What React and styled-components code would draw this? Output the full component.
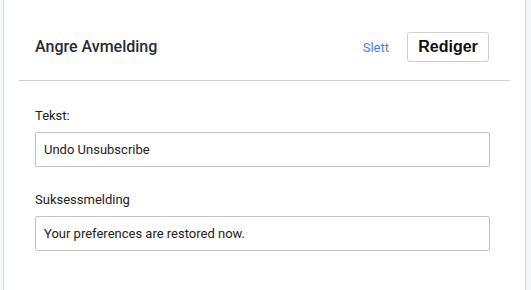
import React from "react";
import styled, { createGlobalStyle } from "styled-components";

const Global = createGlobalStyle`
  html, body { margin: 0; padding: 0; background: #f3f6fa; }
  body { font-family: Roboto, "Liberation Sans", sans-serif; }
`;

const Page = styled.div`
  display: flex;
  width: 531px;
  height: 290px;
  padding-left: 3px;
  box-sizing: border-box;
  background: #f3f6fa;
`;

const Panel = styled.div`
  width: 523px;
  height: 290px;
  box-sizing: border-box;
  background: #fff;
  border-left: 1px solid #d6d9de;
  border-right: 1px solid #d6d9de;
  display: flex;
  flex-direction: column;
`;

const Header = styled.div`
  display: flex;
  align-items: center;
  height: 81px;
  margin: 0 15px;
  padding: 13px 21px 0 16px;
  box-sizing: border-box;
  border-bottom: 1px solid #cfcfcf;
`;

const Title = styled.div`
  flex: 1;
  font-size: 16px;
  font-weight: 500;
  color: #2b2b33;
`;

const LinkButton = styled.span`
  font-size: 13px;
  color: #4a7cf2;
  margin-right: 18px;
  margin-top: 2px;
`;

const Button = styled.button`
  height: 30px;
  width: 82px;
  box-sizing: border-box;
  background: #fff;
  border: 1px solid #cfcfcf;
  border-radius: 3px;
  font-family: "Liberation Sans", Arial, sans-serif;
  font-weight: bold;
  font-size: 16px;
  color: #111;
  padding: 0;
`;

const Body = styled.div`
  display: flex;
  flex-direction: column;
  padding: 27px 35px 0 31px;
  gap: 25px;
`;

const Field = styled.div`
  display: flex;
  flex-direction: column;
  gap: 8px;
`;

const Label = styled.label`
  font-size: 13px;
  color: #222;
  line-height: 16px;
`;

const Input = styled.div`
  height: 35px;
  box-sizing: border-box;
  border: 1px solid #c4c4c4;
  border-radius: 2px;
  display: flex;
  align-items: center;
  padding-left: 8px;
  font-size: 13px;
  color: #222;
`;

export default function App() {
  return (
    <Page>
      <Global />
      <Panel>
        <Header>
          <Title>Angre Avmelding</Title>
          <LinkButton>Slett</LinkButton>
          <Button>Rediger</Button>
        </Header>
        <Body>
          <Field>
            <Label>Tekst:</Label>
            <Input>Undo Unsubscribe</Input>
          </Field>
          <Field>
            <Label>Suksessmelding</Label>
            <Input>Your preferences are restored now.</Input>
          </Field>
        </Body>
      </Panel>
    </Page>
  );
}
